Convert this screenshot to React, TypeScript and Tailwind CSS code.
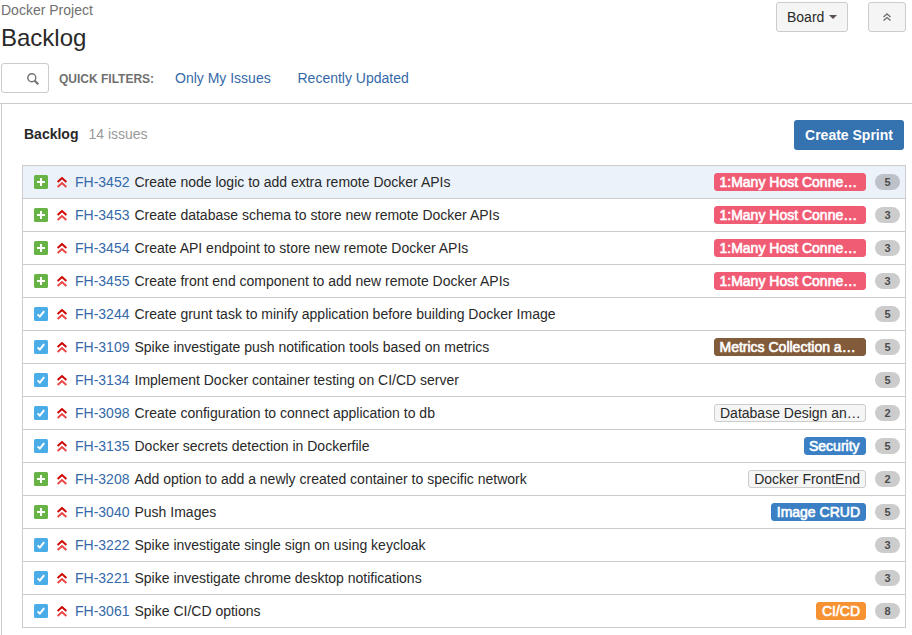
type Tone = "pink" | "brown" | "gray" | "blue" | "orange";

interface Issue {
  id: string;
  title: string;
  story?: boolean;
  points: number;
  epic?: string;
  tone?: Tone;
  selected?: boolean;
}

const issues: Issue[] = [
  { id: "FH-3452", title: "Create node logic to add extra remote Docker APIs", story: true, points: 5, epic: "1:Many Host Conne…", tone: "pink", selected: true },
  { id: "FH-3453", title: "Create database schema to store new remote Docker APIs", story: true, points: 3, epic: "1:Many Host Conne…", tone: "pink" },
  { id: "FH-3454", title: "Create API endpoint to store new remote Docker APIs", story: true, points: 3, epic: "1:Many Host Conne…", tone: "pink" },
  { id: "FH-3455", title: "Create front end component to add new remote Docker APIs", story: true, points: 3, epic: "1:Many Host Conne…", tone: "pink" },
  { id: "FH-3244", title: "Create grunt task to minify application before building Docker Image", points: 5 },
  { id: "FH-3109", title: "Spike investigate push notification tools based on metrics", points: 5, epic: "Metrics Collection a…", tone: "brown" },
  { id: "FH-3134", title: "Implement Docker container testing on CI/CD server", points: 5 },
  { id: "FH-3098", title: "Create configuration to connect application to db", points: 2, epic: "Database Design an…", tone: "gray" },
  { id: "FH-3135", title: "Docker secrets detection in Dockerfile", points: 5, epic: "Security", tone: "blue" },
  { id: "FH-3208", title: "Add option to add a newly created container to specific network", story: true, points: 2, epic: "Docker FrontEnd", tone: "gray" },
  { id: "FH-3040", title: "Push Images", story: true, points: 5, epic: "Image CRUD", tone: "blue" },
  { id: "FH-3222", title: "Spike investigate single sign on using keycloak", points: 3 },
  { id: "FH-3221", title: "Spike investigate chrome desktop notifications", points: 3 },
  { id: "FH-3061", title: "Spike CI/CD options", points: 8, epic: "CI/CD", tone: "orange" },
];

const tones: Record<Tone, string> = {
  pink: "border-[#f15c75] bg-[#f15c75] text-white [-webkit-text-stroke:0.6px_white]",
  brown: "border-[#815b3a] bg-[#815b3a] text-white [-webkit-text-stroke:0.6px_white]",
  gray: "border-[#ccc] bg-[#f5f5f5] text-[#292929]",
  blue: "border-[#3b7fc4] bg-[#3b7fc4] text-white [-webkit-text-stroke:0.6px_white]",
  orange: "border-[#f79232] bg-[#f79232] text-white [-webkit-text-stroke:0.6px_white]",
};

function TypeIcon({ story }: { story?: boolean }) {
  return (
    <svg width="14" height="14" viewBox="0 0 14 14" className="shrink-0">
      <rect width="14" height="14" rx="1.5" fill={story ? "#67b346" : "#4bade8"} />
      {story ? (
        <path d="M7 3v8M3 7h8" stroke="#fff" strokeWidth="2" fill="none" />
      ) : (
        <path d="M3.6 7.400l2.200 2.200 4.400-5.500" stroke="#fff" strokeWidth="2" fill="none" />
      )}
    </svg>
  );
}

function PriorityIcon() {
  return (
    <svg width="10" height="12" viewBox="0 0 10 12" className="ml-[9px] shrink-0" fill="none" strokeWidth="2">
      <path d="M.6 6L5 2l4.400 4" stroke="#ce0000" />
      <path d="M.6 11L5 7l4.400 4" stroke="#ea4444" />
    </svg>
  );
}

function Row({ issue }: { issue: Issue }) {
  return (
    <li className={`flex h-[33px] items-center border-b border-[#ccc] pr-[5px] pl-[11px] ${issue.selected ? "bg-[#ebf2f9]" : "bg-white"}`}>
      <TypeIcon story={issue.story} />
      <PriorityIcon />
      <a className="ml-2 w-[59.500px] shrink-0 text-[#3569a8]">{issue.id}</a>
      <span className="whitespace-nowrap">{issue.title}</span>
      {issue.epic && issue.tone && (
        <span className={`ml-auto flex h-[18px] items-center rounded-[3px] border pr-[5px] whitespace-nowrap ${tones[issue.tone]} ${issue.epic.endsWith("…") ? "w-[152px]" : ""} ${issue.epic === "Security" ? "w-[62px] pl-1" : issue.tone === "gray" ? "pl-[5px]" : "pl-[4.500px]"}`}>
          {issue.epic}
        </span>
      )}
      <span className={`flex h-4 w-[25px] shrink-0 items-center justify-center rounded-full text-[11px] font-bold text-[#4c4c4c] ${issue.epic ? "ml-[9px]" : "ml-auto"} ${issue.selected ? "bg-[#bcc2c8]" : "bg-[#ccc]"}`}>
        {issue.points}
      </span>
    </li>
  );
}

export default function App() {
  return (
    <div className="h-[635px] w-[912px] overflow-hidden bg-white font-['Liberation_Sans',Arial,sans-serif] text-[14px] leading-5 text-[#292929]">
      <header className="flex h-[63px] items-start justify-between pr-[6px] pl-px">
        <div>
          <div className="text-[#707070]">Docker Project</div>
          <h1 className="mt-[3px] text-[24px] leading-[30px]">Backlog</h1>
        </div>
        <div className="mt-[2px] flex gap-5">
          <button className="flex h-[30px] w-[72px] items-center rounded-[3px] border border-[#ccc] bg-[#f5f5f5] pl-[10px]">
            Board
            <svg width="8" height="4" viewBox="0 0 8 4" className="ml-[5px]">
              <path d="M0 0h8L4 4z" fill="#594f4f" />
            </svg>
          </button>
          <button className="flex h-[30px] w-[38px] items-center justify-center rounded-[3px] border border-[#ccc] bg-[#f5f5f5]">
            <svg width="8" height="8" viewBox="0 0 8 8" fill="none" stroke="#707070" strokeWidth="1.3">
              <path d="M.5 4L4 .9 7.500 4M.5 7.600L4 4.500l3.500 3.100" />
            </svg>
          </button>
        </div>
      </header>

      <nav className="flex h-10 items-start pl-px">
        <div className="flex h-[30px] w-12 items-center justify-end rounded-[3px] border border-[#ccc] pt-px pr-[9px]">
          <svg width="12" height="12" viewBox="0 0 12 12" fill="none" stroke="#707070">
            <circle cx="4.800" cy="4.800" r="4" strokeWidth="1.400" />
            <path d="M7.700 7.700l3.600 3.600" strokeWidth="2" />
          </svg>
        </div>
        <div className="flex h-[30px] items-center">
          <span className="ml-[10px] w-[116px] pt-px text-[12px] font-bold text-[#707070]">QUICK FILTERS:</span>
          <a className="w-[122.500px] text-[#3569a8]">Only My Issues</a>
          <a className="text-[#3569a8]">Recently Updated</a>
        </div>
      </nav>

      <div className="border-t border-[#ccc] pl-px">
        <main className="h-[531px] border-l border-[#ccc] pr-[6px] pl-5">
          <div className="flex h-[61px] items-center pr-[2px] pl-[2px]">
            <h2 className="pb-[2px] font-bold">Backlog</h2>
            <span className="ml-[10px] pb-[2px] text-[#999]">14 issues</span>
            <button className="ml-auto flex h-[30px] w-[110px] items-center justify-center rounded-[3px] bg-[#3572b0] font-bold text-white">
              Create Sprint
            </button>
          </div>
          <ul className="border border-b-0 border-[#ccc]">
            {issues.map((issue) => (
              <Row key={issue.id} issue={issue} />
            ))}
          </ul>
        </main>
      </div>
    </div>
  );
}
